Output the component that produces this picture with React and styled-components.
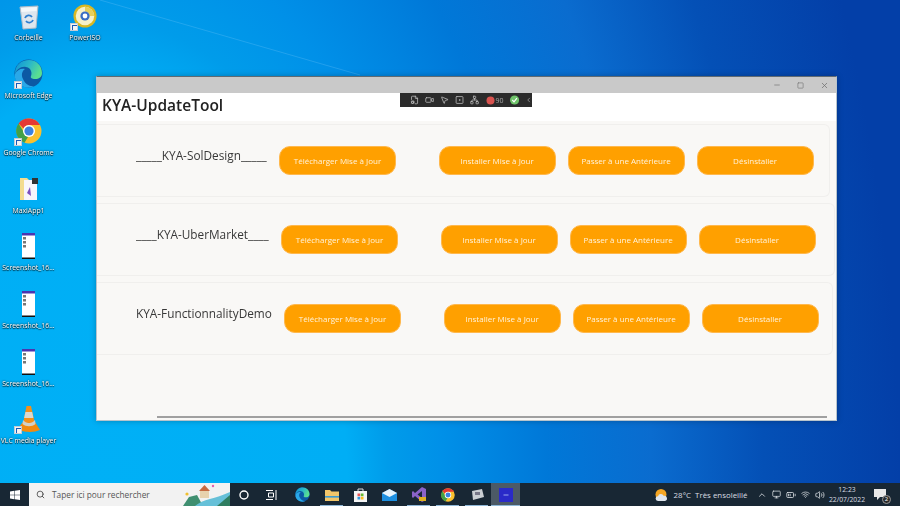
import React from 'react';
import styled, { createGlobalStyle } from 'styled-components';
import { Minus, Square, X, ChevronLeft, ChevronUp, Search, Video, Volume2, Wifi, BatteryMedium, Monitor, FileCog, SquareDot, Network, MousePointer2 } from 'lucide-react';

const GlobalStyle = createGlobalStyle`
  html, body { margin: 0; padding: 0; width: 900px; height: 506px; overflow: hidden; }
  * { box-sizing: border-box; }
  body { font-family: 'Open Sans', 'Noto Sans', sans-serif; }
`;

// the reference is a downscaled capture, everything in it is a little soft
const Screen = styled.div`
  position: relative;
  width: 900px;
  height: 506px;
  display: flex;
  flex-direction: column;
  overflow: hidden;
  filter: blur(0.3px);
`;

const Desktop = styled.div`
  position: relative;
  flex: 1;
  background: radial-gradient(
    ellipse 800px 1333px at 100px 500px,
    #00b0f6 0%,
    #00aef5 31%,
    #009cea 36%,
    #0090e8 43%,
    #0078d8 56%,
    #0a6ccf 69%,
    #0450b6 83%,
    #033fa8 100%
  );
`;

const Ray = styled.svg`
  position: absolute;
  left: 0;
  top: 0;
`;

const IconGrid = styled.div`
  position: absolute;
  left: 0;
  top: 0;
  display: grid;
  grid-auto-flow: column;
  grid-template-rows: repeat(8, 57.6px);
  grid-template-columns: 57px 56px;
`;

const DeskItem = styled.div`
  display: flex;
  flex-direction: column;
  align-items: center;
  padding-top: 1px;
`;

const DeskGlyph = styled.div`
  position: relative;
  width: 30px;
  height: 30px;
  display: flex;
  align-items: center;
  justify-content: center;
`;

const DeskLabel = styled.span`
  margin-top: 2px;
  font-size: 6.9px;
  line-height: 9px;
  color: #fff;
  white-space: nowrap;
  text-shadow: 0 0 2px #000, 0 1px 1px rgba(0, 0, 0, 0.8);
`;

const ShortcutBadge = styled.span`
  position: absolute;
  left: 0;
  bottom: 0;
  width: 8px;
  height: 8px;
  background: #f4f4f4;
  border: 1px solid #c5ccd4;
  &::after {
    content: '';
    position: absolute;
    left: 1px;
    top: 1px;
    width: 4px;
    height: 4px;
    border-left: 1.5px solid #1b5bb8;
    border-top: 1.5px solid #1b5bb8;
  }
`;

const AppWindow = styled.div`
  position: absolute;
  left: 96px;
  top: 76px;
  width: 741px;
  height: 345px;
  display: flex;
  flex-direction: column;
  background: #f9f8f6;
  border: 1px solid #b8c4cc;
  border-top-color: #5f6a72;
  box-shadow: 0 0 6px rgba(0, 0, 0, 0.25);
`;

const TitleBar = styled.div`
  height: 16px;
  background: #c9c9c9;
  display: flex;
  justify-content: flex-end;
  align-items: center;
  color: #707070;
  flex-shrink: 0;
`;

const WinControl = styled.span`
  width: 23.5px;
  display: flex;
  justify-content: center;
`;

const Header = styled.div`
  height: 28px;
  background: #fff;
  padding: 0 0 5px 5px;
  display: flex;
  align-items: center;
  flex-shrink: 0;
`;

const Title = styled.h1`
  margin: 0;
  font-size: 15.5px;
  font-weight: 600;
  color: #222;
  font-family: 'Open Sans', sans-serif;
`;

const DebugBar = styled.div`
  position: absolute;
  left: 303px;
  top: 16px;
  width: 132px;
  height: 14px;
  background: #2b2b2b;
  display: flex;
  align-items: center;
  gap: 6px;
  padding-left: 10px;
  color: #c0c0c0;
`;

const DebugCount = styled.span`
  display: flex;
  align-items: center;
  gap: 1px;
  font-size: 7px;
  color: #a8a8a8;
`;

const RowList = styled.div`
  flex: 1;
  display: flex;
  flex-direction: column;
  gap: 6px;
  padding-top: 3px;
`;

const Row = styled.div`
  height: 73px;
  display: flex;
  align-items: center;
  width: ${p => p.$width}px;
  padding-left: 39px;
  border: 1px solid #f0efed;
  border-left: none;
  border-radius: 0 6px 6px 0;
`;

const RowLabel = styled.span`
  width: ${p => p.$width}px;
  margin-bottom: 12px;
  font-size: 11.8px;
  color: #383838;
  white-space: nowrap;
  flex-shrink: 0;
`;

const ActionButton = styled.button`
  width: 117px;
  height: 29px;
  margin-left: ${p => p.$gap}px;
  background: #ffa000;
  border: 1px solid #ffb84d;
  border-radius: 11px;
  padding: 0;
  color: #fff3dc;
  font-family: inherit;
  font-size: 8px;
  flex-shrink: 0;
`;

const ScrollBar = styled.div`
  height: 2px;
  margin: 0 9px 2px 60px;
  background: #a0a0a0;
`;

const Taskbar = styled.div`
  height: 23px;
  background: #182734;
  display: flex;
  align-items: center;
  flex-shrink: 0;
`;

const StartButton = styled.div`
  width: 29px;
  display: flex;
  justify-content: center;
`;

const SearchBox = styled.div`
  width: 201px;
  height: 23px;
  background: #f2f2f2;
  display: flex;
  align-items: center;
  padding-left: 7px;
  gap: 7px;
  font-size: 8.3px;
  color: #555;
  overflow: hidden;
`;

const SearchText = styled.span`
  flex: 1;
  white-space: nowrap;
`;

const TaskSlot = styled.div`
  position: relative;
  width: ${p => p.$width || 29}px;
  margin-right: ${p => p.$after || 0}px;
  height: 23px;
  display: flex;
  align-items: center;
  justify-content: center;
  background: ${p => (p.$active ? '#4c5a66' : 'transparent')};
  color: #fff;
  ${p =>
    p.$open &&
    `&::after {
      content: '';
      position: absolute;
      left: ${p.$active ? 0 : 3}px;
      right: ${p.$active ? 0 : 3}px;
      bottom: 0;
      height: 1px;
      background: #8fb8d8;
    }`}
`;

const Tray = styled.div`
  margin-left: auto;
  display: flex;
  align-items: center;
  color: #d8dde2;
  height: 23px;
`;

const Weather = styled.div`
  display: flex;
  align-items: center;
  gap: 6px;
  font-size: 7.9px;
  margin-right: 7px;
`;

const TrayIcon = styled.span`
  width: 14.5px;
  display: flex;
  justify-content: center;
`;

const Clock = styled.div`
  width: 40px;
  text-align: center;
  font-size: 6.8px;
  line-height: 10px;
`;

const Notify = styled.div`
  position: relative;
  width: 33px;
  padding-right: 7px;
  display: flex;
  justify-content: center;
`;

const NotifyCount = styled.span`
  position: absolute;
  left: 15px;
  top: 6px;
  width: 9px;
  height: 9px;
  border-radius: 50%;
  background: #2a2a2a;
  border: 1px solid #999;
  color: #fff;
  font-size: 6px;
  line-height: 7px;
  text-align: center;
`;

function RecycleBin() {
  return (
    <svg width="22" height="27" viewBox="0 0 22 27">
      <path d="M2 4 L20 3 L18 25 L5 26 Z" fill="#dfe7ee" stroke="#aebcc8" />
      <path d="M3 5 L19 4 L18.6 8 L3.5 9 Z" fill="#f4f7f9" />
      <path d="M7 15 a4 4 0 0 1 7 -1 M15 17 a4 4 0 0 1 -7 1" fill="none" stroke="#2f7fd0" strokeWidth="1.8" />
    </svg>
  );
}

function PowerIso() {
  return (
    <svg width="24" height="24" viewBox="0 0 26 26">
      <circle cx="13" cy="13" r="12.5" fill="#d8b822" />
      <circle cx="13" cy="13" r="10" fill="#f6f0c8" />
      <path d="M13 3 A10 10 0 0 1 23 13 L18 13 A5 5 0 0 0 13 8 Z" fill="#e6cf5a" />
      <circle cx="13" cy="13" r="5" fill="#3a6cc4" />
      <circle cx="13" cy="13" r="2.6" fill="#fff" />
    </svg>
  );
}

function Edge({ size = 29 }) {
  return (
    <svg width={size} height={size} viewBox="0 0 29 29">
      <defs>
        <linearGradient id="edgeTop" x1="0" y1="0" x2="1" y2="0.4">
          <stop offset="0" stopColor="#0d8fd8" />
          <stop offset="0.55" stopColor="#2bb8c8" />
          <stop offset="1" stopColor="#5ade90" />
        </linearGradient>
      </defs>
      <circle cx="14.5" cy="14.5" r="14" fill="#0c59a4" />
      <path d="M1 15 C1 6 7 1 15 1 C23 1 28 7 28 14 C28 18 25 20 21 20 C18 20 16 19 17 17 C18 15 18 9 12 8 C7 7 3 10 1 15 Z" fill="url(#edgeTop)" />
      <path d="M1 15 C3 11 7 9 11 10 C8 12 7 16 9 20 C11 25 16 28 20 27 C17 29 12 29 8 27 C3 24 0 20 1 15 Z" fill="#2aa8e8" />
    </svg>
  );
}

function Chrome({ size = 26 }) {
  return (
    <svg width={size} height={size} viewBox="0 0 26 26">
      <circle cx="13" cy="13" r="12.5" fill="#fbc02d" />
      <path d="M13 .5 A12.5 12.5 0 0 1 24 7 L13 7 A6 6 0 0 0 7.5 10.5 L2.6 5.5 A12.5 12.5 0 0 1 13 .5 Z" fill="#e53935" />
      <path d="M2.6 5.5 L8 14.5 A6 6 0 0 0 12 19 L8.5 24.7 A12.5 12.5 0 0 1 2.6 5.5 Z" fill="#43a047" />
      <circle cx="13" cy="13" r="6" fill="#fff" />
      <circle cx="13" cy="13" r="4.6" fill="#3b82e0" />
    </svg>
  );
}

function ProjectFolder() {
  return (
    <svg width="20" height="24" viewBox="0 0 20 24">
      <path d="M1 1 H8 L10 3 H16 V23 H1 Z" fill="#f3dc8f" />
      <rect x="5" y="3" width="13" height="20" fill="#f8f6fb" />
      <rect x="13" y="1" width="6" height="6" fill="#333" />
      <path d="M8 16 L11 10 L12 19 Z" fill="#7b4fc0" />
    </svg>
  );
}

function PhoneShot() {
  return (
    <svg width="13" height="26" viewBox="0 0 13 26">
      <rect width="13" height="26" fill="#fff" />
      <rect width="13" height="2.5" fill="#4a35b0" />
      <rect y="24.5" width="13" height="1.5" fill="#111" />
      <rect x="1" y="4" width="3" height="2.5" fill="#777" />
      <rect x="1" y="8" width="3" height="2.5" fill="#777" />
      <rect x="1" y="12" width="3" height="2.5" fill="#777" />
    </svg>
  );
}

function VlcCone() {
  return (
    <svg width="26" height="28" viewBox="0 0 26 28">
      <path d="M10.5 1 H15 L19 19 H7 Z" fill="#f39019" />
      <path d="M9.4 7 H16.2 L17.4 13 H8.1 Z" fill="#d8d8d0" />
      <path d="M3 22 L7 17 H19 L24 25 C18 28 6 27 3 25 Z" fill="#f08a10" />
      <path d="M7 15 C10 19 16 19 19 15 L19.5 19 C16 22 10 22 6.5 19 Z" fill="#d0d0c8" />
    </svg>
  );
}

function WindowsLogo() {
  return (
    <svg width="10" height="10" viewBox="0 0 10 10" fill="#fff">
      <path d="M0 1.4 L4.3 .8 V4.7 H0 Z M4.8 .7 L10 0 V4.7 H4.8 Z M0 5.2 H4.3 V9.2 L0 8.6 Z M4.8 5.2 H10 V10 L4.8 9.3 Z" />
    </svg>
  );
}

function SearchDoodle() {
  return (
    <svg width="47" height="23" viewBox="0 0 47 23">
      <path d="M0 23 L6 14 L14 12 L20 23 Z" fill="#3f8f70" />
      <path d="M12 23 C20 16 32 16 47 9 V23 Z" fill="#66c0d8" />
      <path d="M34 23 L47 12 V23 Z" fill="#2f7d60" />
      <rect x="17" y="7" width="9" height="8" fill="#e7d2ae" />
      <path d="M16 8 L21.5 2 L27 8 Z" fill="#c56a42" />
      <circle cx="30" cy="3" r="1.2" fill="#e060b0" />
      <circle cx="4" cy="11" r="1.6" fill="#f0c030" />
    </svg>
  );
}

function Explorer() {
  return (
    <svg width="14" height="12" viewBox="0 0 14 12">
      <path d="M0 1 H5 L6.5 2.5 H14 V12 H0 Z" fill="#f2c66a" />
      <rect y="7" width="14" height="1.6" fill="#3d9ad0" />
    </svg>
  );
}

function Store() {
  return (
    <svg width="13" height="14" viewBox="0 0 13 14">
      <path d="M0 3 H13 V14 H0 Z" fill="#f5f5f5" />
      <path d="M4 3 V1 H9 V3" fill="none" stroke="#ddd" />
      <rect x="3.5" y="5.5" width="2.7" height="2.7" fill="#e55" />
      <rect x="6.8" y="5.5" width="2.7" height="2.7" fill="#6b3" />
      <rect x="3.5" y="8.8" width="2.7" height="2.7" fill="#39d" />
      <rect x="6.8" y="8.8" width="2.7" height="2.7" fill="#fb2" />
    </svg>
  );
}

function Mail() {
  return (
    <svg width="15" height="12" viewBox="0 0 15 12">
      <path d="M0 4 L7.5 0 L15 4 V12 H0 Z" fill="#1d8fe0" />
      <path d="M0 4 L7.5 0 L15 4 L7.5 8 Z" fill="#e8f4fc" />
    </svg>
  );
}

function VisualStudio() {
  return (
    <svg width="14" height="15" viewBox="0 0 14 15">
      <path d="M10 0 L14 2 V13 L10 15 L3 9 L1 11 L0 10 V5 L1 4 L3 6 Z" fill="#8a63c8" />
      <path d="M10 4 L5.5 7.5 L10 11 Z" fill="#182734" />
      <rect x="7" y="10" width="7" height="4" fill="#e0b020" />
    </svg>
  );
}

function PaintTool() {
  return (
    <svg width="14" height="12" viewBox="0 0 14 12">
      <path d="M2 2 L12 0 L14 8 L3 11 Z" fill="#c9ced3" />
      <rect x="5" y="3" width="5" height="3" fill="#778" />
    </svg>
  );
}

function RunningApp() {
  return (
    <svg width="14" height="14" viewBox="0 0 14 14">
      <rect width="14" height="14" fill="#2a2ac8" />
      <rect x="4.5" y="6.5" width="5" height="1" fill="#9aa5ee" />
    </svg>
  );
}

function Sun() {
  return (
    <svg width="13" height="12" viewBox="0 0 13 12">
      <circle cx="6" cy="5.5" r="5.5" fill="#f5a623" />
      <path d="M3 12 a2.4 2.4 0 0 1 0 -4.8 a3 3 0 0 1 5.6 -.4 a2.6 2.6 0 0 1 1.4 5.2 Z" fill="#dfe6ee" />
    </svg>
  );
}

const desktopItems = [
  { name: 'Corbeille', icon: <RecycleBin /> },
  { name: 'Microsoft Edge', icon: <Edge />, shortcut: true },
  { name: 'Google Chrome', icon: <Chrome />, shortcut: true },
  { name: 'MaxiApp1', icon: <ProjectFolder /> },
  { name: 'Screenshot_16...', icon: <PhoneShot /> },
  { name: 'Screenshot_16...', icon: <PhoneShot /> },
  { name: 'Screenshot_16...', icon: <PhoneShot /> },
  { name: 'VLC media player', icon: <VlcCone />, shortcut: true },
  { name: 'PowerISO', icon: <PowerIso />, shortcut: true },
];

const rows = [
  { name: '_____KYA-SolDesign_____', labelWidth: 143, width: 733 },
  { name: '____KYA-UberMarket____', labelWidth: 145, width: 738 },
  { name: 'KYA-FunctionnalityDemo', labelWidth: 148, width: 736 },
];

const actions = [
  { text: 'Télécharger Mise à Jour', gap: 0 },
  { text: 'Installer Mise à Jour', gap: 42.6 },
  { text: 'Passer à une Antérieure', gap: 12 },
  { text: 'Désinstaller', gap: 12 },
];

export default function App() {
  return (
    <Screen>
      <GlobalStyle />
      <Desktop>
        <Ray width="400" height="90" viewBox="0 0 400 90">
          <path d="M100 0 L360 75" stroke="rgba(150,215,255,0.22)" strokeWidth="1" fill="none" />
        </Ray>
        <IconGrid>
          {desktopItems.map((item, i) => (
            <DeskItem key={i}>
              <DeskGlyph>
                {item.icon}
                {item.shortcut && <ShortcutBadge />}
              </DeskGlyph>
              <DeskLabel>{item.name}</DeskLabel>
            </DeskItem>
          ))}
        </IconGrid>
        <AppWindow>
          <TitleBar>
            <WinControl><Minus size={8} /></WinControl>
            <WinControl><Square size={7} /></WinControl>
            <WinControl><X size={9} /></WinControl>
          </TitleBar>
          <Header>
            <Title>KYA-UpdateTool</Title>
          </Header>
          <DebugBar>
            <FileCog size={10} />
            <Video size={10} />
            <MousePointer2 size={10} />
            <SquareDot size={10} />
            <Network size={10} />
            <DebugCount>
              <svg width="9" height="9" viewBox="0 0 9 9">
                <circle cx="4.5" cy="4.5" r="4" fill="#d9534f" />
              </svg>
              90
            </DebugCount>
            <svg width="10" height="10" viewBox="0 0 10 10">
              <circle cx="5" cy="5" r="5" fill="#6fc36a" />
              <path d="M2.5 5 L4.4 7 L7.6 3" fill="none" stroke="#fff" strokeWidth="1.3" />
            </svg>
            <ChevronLeft size={8} />
          </DebugBar>
          <RowList>
            {rows.map(row => (
              <Row key={row.name} $width={row.width}>
                <RowLabel $width={row.labelWidth}>{row.name}</RowLabel>
                {actions.map(action => (
                  <ActionButton key={action.text} type="button" $gap={action.gap}>
                    {action.text}
                  </ActionButton>
                ))}
              </Row>
            ))}
          </RowList>
          <ScrollBar />
        </AppWindow>
      </Desktop>
      <Taskbar>
        <StartButton><WindowsLogo /></StartButton>
        <SearchBox>
          <Search size={9} color="#333" />
          <SearchText>Taper ici pour rechercher</SearchText>
          <SearchDoodle />
        </SearchBox>
        <TaskSlot $width={27}>
          <svg width="10" height="10" viewBox="0 0 10 10">
            <circle cx="5" cy="5" r="4" fill="none" stroke="#fff" strokeWidth="1.4" />
          </svg>
        </TaskSlot>
        <TaskSlot $after={2}>
          <svg width="11" height="10" viewBox="0 0 11 10" fill="none" stroke="#fff">
            <path d="M0 .5 H7 M0 9.5 H7 M2.5 3 H7.5 V7 H2.5 Z M10 0 V10" />
          </svg>
        </TaskSlot>
        <TaskSlot><Edge size={15} /></TaskSlot>
        <TaskSlot $open><Explorer /></TaskSlot>
        <TaskSlot><Store /></TaskSlot>
        <TaskSlot><Mail /></TaskSlot>
        <TaskSlot $open><VisualStudio /></TaskSlot>
        <TaskSlot $open><Chrome size={14} /></TaskSlot>
        <TaskSlot $open><PaintTool /></TaskSlot>
        <TaskSlot $open $active><RunningApp /></TaskSlot>
        <Tray>
          <Weather>
            <Sun />
            <span>28°C &nbsp;Très ensoleillé</span>
          </Weather>
          <TrayIcon><ChevronUp size={10} /></TrayIcon>
          <TrayIcon><Monitor size={9} /></TrayIcon>
          <TrayIcon><BatteryMedium size={10} /></TrayIcon>
          <TrayIcon><Wifi size={9} /></TrayIcon>
          <TrayIcon><Volume2 size={10} /></TrayIcon>
          <Clock>
            <div>12:23</div>
            <div>22/07/2022</div>
          </Clock>
          <Notify>
            <svg width="12" height="11" viewBox="0 0 12 11">
              <path d="M0 0 H12 V8 H6 L3 11 V8 H0 Z" fill="#e8e8e8" />
            </svg>
            <NotifyCount>2</NotifyCount>
          </Notify>
        </Tray>
      </Taskbar>
    </Screen>
  );
}
